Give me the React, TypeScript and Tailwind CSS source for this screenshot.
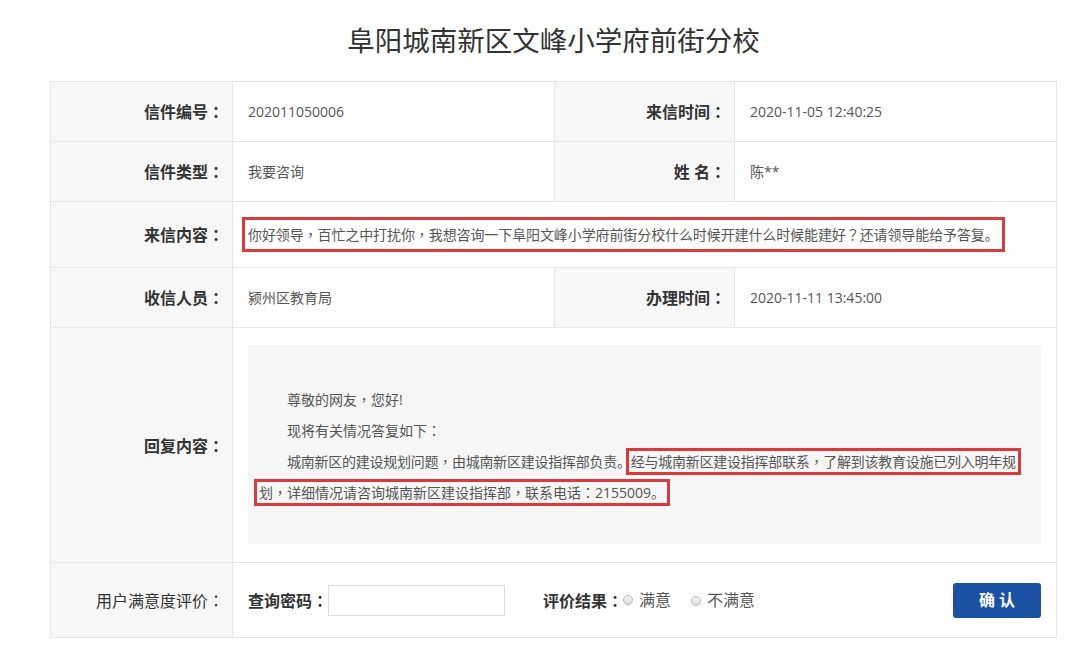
import type { ReactNode } from "react";

// 全角标点（，：？）在参考图里是居中排的，用繁中字形来排
function zh(text: string): ReactNode[] {
  return text.split(/([，：？])/).map((s, i) =>
    /^[，：？]$/.test(s) ? (
      <span key={i} className="font-['Noto_Sans_CJK_TC',sans-serif]">
        {s}
      </span>
    ) : (
      s
    ),
  );
}

// 表格单元格：左侧灰底标签 + 右侧白底内容
function Label({ text, h, bold = true }: { text: string; h: string; bold?: boolean }) {
  return (
    <div
      className={`flex items-center justify-end border-r border-b border-[#e6e6e6] bg-[#f7f7f7] pr-[8px] text-[16px] text-[#333] ${h} ${
        bold ? "font-bold" : "font-normal"
      }`}
    >
      <span>{zh(text)}</span>
    </div>
  );
}

function Value({ children, h }: { children: ReactNode; h: string }) {
  return (
    <div className={`flex items-center border-r border-b border-[#e6e6e6] pl-[15px] text-[14px] text-[#555] ${h}`}>
      {children}
    </div>
  );
}

function Radio() {
  return <span className="inline-block h-[10px] w-[10px] rounded-full border border-[#b8b8b8] bg-linear-to-b from-[#f6f6f6] to-[#dcdcdc]" />;
}

export default function App() {
  return (
    <div className="min-h-screen bg-white font-['Open_Sans','Noto_Sans_CJK_SC',sans-serif]">
      <div className="ml-[50px] w-[1007px]">
        <h1 className="flex h-[81px] items-center justify-center text-[27.5px] font-normal text-[#333]">
          阜阳城南新区文峰小学府前街分校
        </h1>

        <div className="grid grid-cols-[182px_322px_180px_322px] border-t border-l border-[#e6e6e6]">
          {/* 第一行 */}
          <Label h="h-[60px]" text="信件编号：" />
          <Value h="h-[60px]">202011050006</Value>
          <Label h="h-[60px]" text="来信时间：" />
          <Value h="h-[60px]">2020-11-05 12:40:25</Value>

          {/* 第二行 */}
          <Label h="h-[60px]" text="信件类型：" />
          <Value h="h-[60px]">我要咨询</Value>
          <Label h="h-[60px]" text="姓 名：" />
          <Value h="h-[60px]">陈**</Value>

          {/* 来信内容 */}
          <Label h="h-[66px]" text="来信内容：" />
          <div className="col-span-3 flex h-[66px] items-center border-r border-b border-[#e6e6e6] pl-[9px] text-[14px] text-[#555]">
            <span className="inline-block border-[3px] border-[#d83b3b] px-[3px] py-[4px] leading-[21px] tracking-[-0.1px]">
              {zh("你好领导，百忙之中打扰你，我想咨询一下阜阳文峰小学府前街分校什么时候开建什么时候能建好？还请领导能给予答复。")}
            </span>
          </div>

          {/* 第四行 */}
          <Label h="h-[60px]" text="收信人员：" />
          <Value h="h-[60px]">颍州区教育局</Value>
          <Label h="h-[60px]" text="办理时间：" />
          <Value h="h-[60px]">2020-11-11 13:45:00</Value>

          {/* 回复内容 */}
          <Label h="h-[235px]" text="回复内容：" />
          <div className="col-span-3 h-[235px] border-r border-b border-[#e6e6e6] px-[15px] pt-[17px] pb-[18px]">
            <div className="h-full whitespace-nowrap bg-[#f6f6f6] pt-[39px] pl-[11px] text-[14px] leading-[30px] text-[#555]">
              <div className="pl-[28px]">{zh("尊敬的网友，您好!")}</div>
              <div className="pl-[28px]">{zh("现将有关情况答复如下：")}</div>
              <div className="pl-[28px] tracking-[-0.25px]">
                {zh("城南新区的建设规划问题，由城南新区建设指挥部负责。")}
                {/* 红框只是标注，不占排版宽度 */}
                <span className="-mx-[5px] border-[3px] border-[#d83b3b] px-[2px] py-[1px]">
                  {zh("经与城南新区建设指挥部联系，了解到该教育设施已列入明年规")}
                </span>
              </div>
              <div>
                <span className="-mx-[5px] border-[3px] border-[#d83b3b] px-[2px] py-[1px]">
                  {zh("划，详细情况请咨询城南新区建设指挥部，联系电话：2155009。")}
                </span>
              </div>
            </div>
          </div>

          {/* 满意度评价 */}
          <Label h="h-[75px]" text="用户满意度评价：" bold={false} />
          <div className="col-span-3 flex h-[75px] items-center border-r border-b border-[#e6e6e6] px-[15px] text-[16px]">
            <span className="font-bold text-[#333]">{zh("查询密码：")}</span>
            <input type="text" className="h-[31px] w-[177px] border border-[#dcdcdc] bg-white outline-none" />
            <span className="ml-[38px] font-bold text-[#333]">{zh("评价结果：")}</span>
            <Radio />
            <span className="ml-[6px] text-[#555]">满意</span>
            <span className="ml-[20px]">
              <Radio />
            </span>
            <span className="ml-[6px] text-[#555]">不满意</span>
            <button className="ml-auto h-[35px] w-[88px] rounded-[3px] bg-[#1c52a3] text-[16px] font-bold text-white">
              确 认
            </button>
          </div>
        </div>
      </div>
    </div>
  );
}
